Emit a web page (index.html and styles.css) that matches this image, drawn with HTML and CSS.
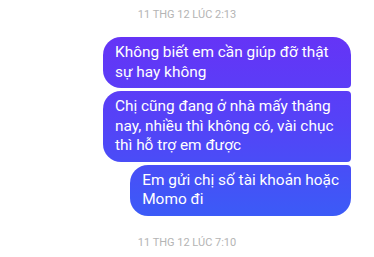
FILE: index.html
```html
<!DOCTYPE html>
<html lang="vi">
<head>
    <meta charset="UTF-8">
    <meta name="viewport" content="width=device-width, initial-scale=1.0">
    <title>Tin nhắn</title>
    <link rel="stylesheet" href="styles.css">
</head>
<body>

<div class="thread">
    <div class="time">11 THG 12 LÚC 2:13</div>

    <div class="group">
        <div class="bubble first">Không biết em cần giúp đỡ thật sự hay không</div>
        <div class="bubble middle">Chị cũng đang ở nhà mấy tháng nay, nhiều thì không có, vài chục thì hỗ trợ em được</div>
        <div class="bubble last">Em gửi chị số tài khoản hoặc<br>Momo đi</div>
    </div>

    <div class="time time-bottom">11 THG 12 LÚC 7:10</div>
</div>

</body>
</html>
```

FILE: styles.css
```css
body {
    margin: 0;
    padding: 0;
    background-color: #fff;
    font-family: Roboto, "Liberation Sans", sans-serif;
}

.thread {
    display: flex;
    flex-direction: column;
    padding: 8px 23px 0 0;
}

.time {
    text-align: center;
    font-size: 11px;
    line-height: 14px;
    color: #b4b4b4;
    padding-left: 23px; /* centrato sulla finestra */
}

.time-bottom {
    margin-top: 20px;
}

.group {
    display: flex;
    flex-direction: column;
    align-items: flex-end;
    gap: 3px;
    margin-top: 15px;
}

.bubble {
    max-width: 226px;
    padding: 6px 10px 6px 12px;
    font-size: 15.4px;
    line-height: 19.5px;
    color: #fff;
    background: linear-gradient(to bottom, #6c2ef6 0px, #5542f7 120px, #3a5cf7 220px);
    background-attachment: fixed;
    border-radius: 18px 4px 4px 18px;
}

.bubble.first {
    border-top-right-radius: 18px;
}

.bubble.last {
    padding-right: 12px;
    border-bottom-right-radius: 18px;
}
```
